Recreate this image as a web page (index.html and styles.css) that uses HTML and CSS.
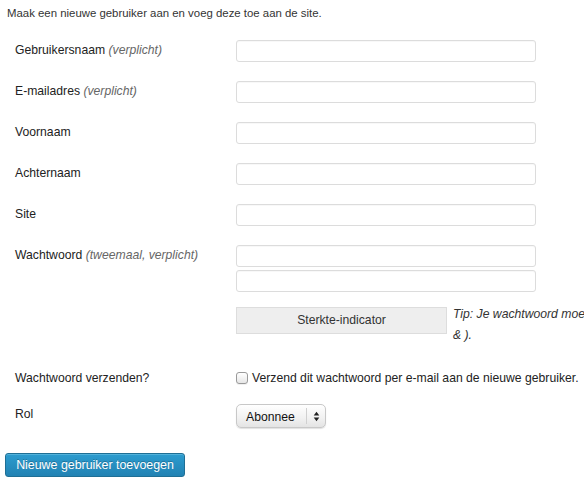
FILE: index.html
```html
<!DOCTYPE html>
<html lang="nl">
<head>
<meta charset="utf-8">
<title>Nieuwe gebruiker</title>
<link rel="stylesheet" href="styles.css">
</head>
<body>
<p class="intro">Maak een nieuwe gebruiker aan en voeg deze toe aan de site.</p>
<form class="form">
  <div class="row">
    <label class="lbl" for="user">Gebruikersnaam <span class="req">(verplicht)</span></label>
    <div class="field"><input class="txt" id="user" type="text"></div>
  </div>
  <div class="row">
    <label class="lbl" for="mail">E-mailadres <span class="req">(verplicht)</span></label>
    <div class="field"><input class="txt" id="mail" type="text"></div>
  </div>
  <div class="row">
    <label class="lbl" for="first">Voornaam</label>
    <div class="field"><input class="txt" id="first" type="text"></div>
  </div>
  <div class="row">
    <label class="lbl" for="last">Achternaam</label>
    <div class="field"><input class="txt" id="last" type="text"></div>
  </div>
  <div class="row">
    <label class="lbl" for="site">Site</label>
    <div class="field"><input class="txt" id="site" type="text"></div>
  </div>
  <div class="row row-pass">
    <label class="lbl" for="pass1">Wachtwoord <span class="req">(tweemaal, verplicht)</span></label>
    <div class="field">
      <input class="txt" id="pass1" type="password">
      <input class="txt txt2" id="pass2" type="password">
      <div class="strength-line">
        <div class="strength">Sterkte-indicator</div>
        <p class="hint">Tip: Je wachtwoord moet minimaal zeven tekens lang zijn. Om het sterker te maken, gebruik hoofd- en kleine letters, nummers en symbolen zoals ! " ? $ % ^<br>&amp; ).</p>
      </div>
    </div>
  </div>
  <div class="row row-send">
    <span class="lbl">Wachtwoord verzenden?</span>
    <label class="field check-label"><span class="box"></span>Verzend dit wachtwoord per e-mail aan de nieuwe gebruiker.</label>
  </div>
  <div class="row row-role">
    <label class="lbl" for="role">Rol</label>
    <div class="field">
      <div class="select" id="role">
        <span class="select-text">Abonnee</span>
        <span class="select-arrows">
          <svg width="7" height="11" viewBox="0 0 7 11"><path d="M3.5 0.8 L6.3 4.4 L0.7 4.4 Z M3.5 10.2 L6.3 6.6 L0.7 6.6 Z" fill="#222"/></svg>
        </span>
      </div>
    </div>
  </div>
  <div class="submit-row">
    <button class="primary" type="button">Nieuwe gebruiker toevoegen</button>
  </div>
</form>
</body>
</html>
```
FILE: styles.css
```css
html, body {
  margin: 0;
  padding: 0;
  overflow: hidden;
  background: #fff;
}
body {
  font-family: "Liberation Sans", Arial, Helvetica, sans-serif;
  font-size: 12.2px;
  line-height: 16px;
  color: #333;
  width: 584px;
}
.intro {
  margin: 0;
  padding: 5px 7px 0;
  font-size: 11.4px;
}
.form {
  display: flex;
  flex-direction: column;
  margin-top: 19px;
}
.row {
  display: flex;
  align-items: flex-start;
  margin-bottom: 19px;
}
.lbl {
  flex: 0 0 221px;
  padding-left: 15px;
  padding-top: 2px;
  color: #222;
}
.req {
  font-style: italic;
  color: #666;
}
.field {
  flex: 0 0 auto;
  display: flex;
  flex-direction: column;
}
.txt {
  box-sizing: border-box;
  width: 300px;
  height: 22px;
  margin: 0;
  border: 1px solid #dcdcdc;
  border-radius: 3px;
  background: #fff;
  box-shadow: inset 0 1px 1px rgba(0, 0, 0, 0.03);
  font: inherit;
  padding: 2px 5px;
}
.txt2 {
  margin-top: 3px;
}
.strength-line {
  display: flex;
  align-items: flex-start;
  height: 27px;
  margin-top: 15px;
  width: 800px;
}
.strength {
  box-sizing: border-box;
  flex: 0 0 211px;
  height: 27px;
  line-height: 25px;
  text-align: center;
  background: #eee;
  border: 1px solid #ddd;
  color: #333;
}
.hint {
  margin: -3px 0 0 6px;
  font-style: italic;
  color: #333;
  line-height: 21px;
  white-space: nowrap;
}
.row-pass {
  margin-bottom: 0;
}
.row-send {
  margin-top: 34px;
  margin-bottom: 0;
}
.check-label {
  flex-direction: row;
  align-items: center;
  padding-top: 2px;
  color: #222;
  white-space: nowrap;
}
.box {
  box-sizing: border-box;
  width: 12px;
  height: 12px;
  margin-right: 4px;
  border: 1px solid #9a9a9a;
  border-radius: 3px;
  background: linear-gradient(#ffffff, #e6e6e6);
  box-shadow: 0 1px 0 rgba(0, 0, 0, 0.06);
}
.row-role {
  margin-top: 18px;
  margin-bottom: 0;
}
.select {
  box-sizing: border-box;
  display: flex;
  align-items: center;
  width: 90px;
  height: 24px;
  border: 1px solid #c8c8c8;
  border-radius: 5px;
  background: linear-gradient(#ffffff, #f1f1f1 60%, #e4e4e4);
  box-shadow: 0 1px 1px rgba(0, 0, 0, 0.12);
  color: #111;
}
.select-text {
  flex: 1 1 auto;
  padding-left: 9px;
  padding-top: 1px;
}
.select-arrows {
  display: flex;
  align-items: center;
  justify-content: center;
  width: 18px;
  height: 16px;
  border-left: 1px solid #d0d0d0;
}
.submit-row {
  margin-top: 25px;
  padding-left: 5px;
}
.primary {
  box-sizing: border-box;
  width: 180px;
  height: 24px;
  margin: 0;
  padding: 0;
  border: 1px solid #1f6f95;
  border-radius: 3px;
  background: linear-gradient(#2d9ccf, #2282b3);
  box-shadow: inset 0 1px 0 rgba(120, 200, 230, 0.5);
  color: #fff;
  font-family: "Liberation Sans", Arial, Helvetica, sans-serif;
  font-size: 12.4px;
  text-shadow: 0 -1px 0 rgba(0, 0, 0, 0.25);
}
```
